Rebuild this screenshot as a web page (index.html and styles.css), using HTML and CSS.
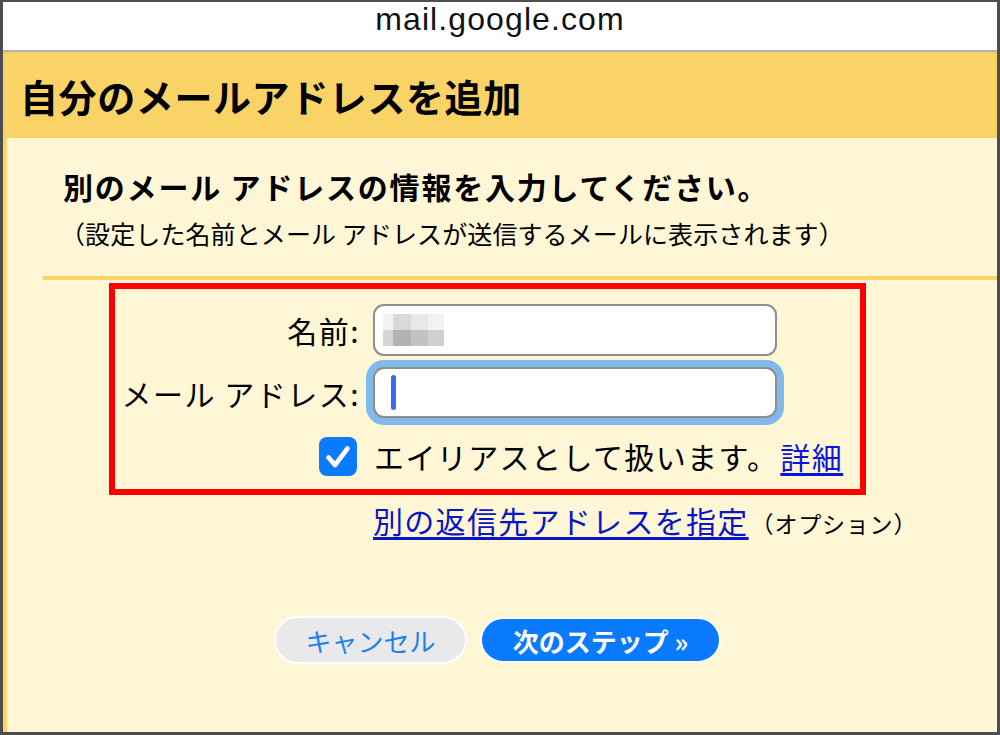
FILE: index.html
```html
<!DOCTYPE html>
<html lang="ja">
<head>
<meta charset="utf-8">
<title>自分のメールアドレスを追加</title>
<link rel="stylesheet" href="styles.css">
</head>
<body>
<div class="frame">
  <div class="urlbar">mail.google.com</div>
  <div class="header"><h1>自分のメールアドレスを追加</h1></div>
  <div class="main">
    <h2 class="lead">別のメール アドレスの情報を入力してください。</h2>
    <p class="sub">（設定した名前とメール アドレスが送信するメールに表示されます）</p>
    <div class="rule"></div>
    <div class="redbox">
      <div class="form">
        <div class="label">名前:</div>
        <div class="field">
          <span class="mosaic">
            <span class="m m1"></span><span class="m m2"></span><span class="m m3"></span><span class="m m4"></span>
            <span class="m m5"></span><span class="m m6"></span><span class="m m7"></span><span class="m m8"></span>
          </span>
        </div>
        <div class="label">メール アドレス:</div>
        <div class="field focus"><span class="caret"></span></div>
        <div class="check">
          <svg width="38" height="39" viewBox="0 0 38 39"><rect x="0" y="0" width="38" height="39" rx="8" fill="#0a7bff"/><path d="M9.5 20.5 L16 28 L28.5 11.5" fill="none" stroke="#fff" stroke-width="4.6" stroke-linecap="round" stroke-linejoin="round"/></svg>
        </div>
        <div class="checktext">エイリアスとして扱います。<a class="more" href="#">詳細</a></div>
      </div>
    </div>
    <div class="reply"><a class="replylink" href="#">別の返信先アドレスを指定</a><span class="opt">（オプション）</span></div>
    <div class="buttons">
      <button class="btn cancel">キャンセル</button>
      <button class="btn next">次のステップ »</button>
    </div>
  </div>
</div>
</body>
</html>
```
FILE: styles.css
```css
html, body {
  margin: 0;
  padding: 0;
  background: #4d4d4d;
}
body {
  font-family: "Noto Sans CJK JP", "Noto Sans", sans-serif;
  color: #000;
}
.frame {
  box-sizing: border-box;
  width: 1000px;
  height: 735px;
  border: 3px solid #4d4d4d;
  border-top-width: 2px;
  display: flex;
  flex-direction: column;
  background: #fff6d6;
  overflow: hidden;
}
.urlbar {
  box-sizing: border-box;
  height: 50px;
  background: #fff;
  border-bottom: 2px solid #b3b3b3;
  text-align: center;
  font-family: "Liberation Sans", Arial, sans-serif;
  font-size: 32px;
  letter-spacing: 1.1px;
  line-height: 34px;
  padding-top: 0;
  color: #111;
}
.header {
  height: 86px;
  background: #fad366;
  border-top: 1px solid #f3c95c;
  box-sizing: border-box;
  padding-left: 17px;
}
.header h1 {
  margin: 0;
  font-size: 38px;
  font-weight: 700;
  letter-spacing: 0.6px;
  line-height: 86px;
}
.main {
  flex: 1;
  border-left: 4px solid #fbd46a;
  display: flex;
  flex-direction: column;
  align-items: flex-start;
}
.lead {
  margin: 28px 0 0 56px;
  font-size: 30px;
  font-weight: 700;
  line-height: 40px;
  letter-spacing: 1.8px;
}
.sub {
  margin: 10px 0 0 53px;
  font-size: 25px;
  line-height: 34px;
  letter-spacing: 0.1px;
}
.rule {
  align-self: stretch;
  margin: 26px 0 0 36px;
  height: 4px;
  background: #fcd36b;
}
.redbox {
  box-sizing: border-box;
  margin: 3px 0 0 102px;
  width: 757px;
  height: 212px;
  border: 6px solid #ff0000;
  padding-top: 15px;
}
.form {
  display: grid;
  grid-template-columns: 245px 1fr;
  column-gap: 13px;
  grid-template-rows: 52px 51px 47px;
  row-gap: 11px;
  align-items: center;
}
.label {
  text-align: right;
  font-size: 30px;
  line-height: 38px;
  letter-spacing: 1.5px;
  white-space: nowrap;
}
.field {
  box-sizing: border-box;
  width: 404px;
  height: 52px;
  background: #fff;
  border: 2px solid #8e8e8e;
  border-radius: 11px;
  display: flex;
  align-items: center;
  padding-left: 8px;
}
.field.focus {
  height: 51px;
  box-shadow: 0 0 0 7px #80b9ec;
  padding-left: 16px;
}
.caret {
  width: 5px;
  height: 35px;
  border-radius: 3px;
  background: #3d6af2;
}
.mosaic {
  display: grid;
  grid-template-columns: 10px 18px 17px 16px;
  grid-template-rows: 16px 16px;
}
.m1 { background: #f2f2f2; }
.m2 { background: #d9d9d9; }
.m3 { background: #e8e8e8; }
.m4 { background: #f2f2f2; }
.m5 { background: #d6d6d6; }
.m6 { background: #b3b3b3; }
.m7 { background: #c2c2c2; }
.m8 { background: #d0d0d0; }
.check {
  justify-self: end;
  align-self: end;
  margin-right: 3px;
  height: 39px;
}
.check svg { display: block; }
.checktext {
  align-self: end;
  font-size: 30px;
  line-height: 40px;
  letter-spacing: 1.4px;
  white-space: nowrap;
  margin-left: 1px;
}
.more {
  color: #0a14dc;
  text-decoration: underline;
  text-underline-offset: 4px;
  margin-left: 2px;
}
.reply {
  margin: 5px 0 0 366px;
  line-height: 40px;
  white-space: nowrap;
}
.replylink {
  font-size: 30px;
  letter-spacing: 1.3px;
  color: #0a14c8;
  text-decoration: underline;
  text-underline-offset: 4px;
}
.opt {
  font-size: 23px;
  letter-spacing: 0.8px;
  margin-left: 2px;
}
.buttons {
  margin: 70px 0 0 267px;
  display: flex;
  align-items: center;
  gap: 13px;
}
.btn {
  box-sizing: border-box;
  border: 2px solid #fff;
  border-radius: 24px;
  font-family: "Noto Sans CJK JP", sans-serif;
  font-size: 26px;
  padding: 0;
  display: flex;
  align-items: center;
  justify-content: center;
}
.cancel {
  width: 193px;
  height: 48px;
  background: #e9e9ec;
  color: #1b7ff0;
}
.next {
  width: 241px;
  height: 46px;
  background: #0a7aff;
  color: #fff;
  font-weight: 700;
}
```
